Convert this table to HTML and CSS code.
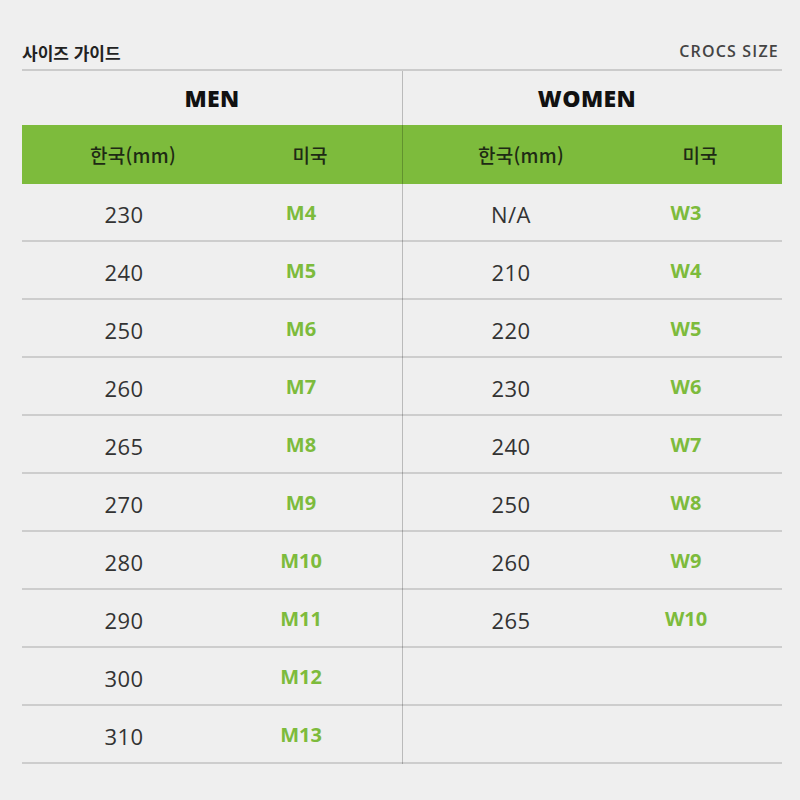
FILE: index.html
```html
<!DOCTYPE html>
<html lang="ko">
<head>
<meta charset="utf-8">
<link rel="stylesheet" href="styles.css">
</head>
<body>
<div class="page">
  <div class="titlebar">
    <span class="title">사이즈 가이드</span>
    <span class="brand">CROCS SIZE</span>
  </div>
  <div class="table">
    <div class="half men">
      <div class="gender">MEN</div>
      <div class="head"><span class="h-kr">한국(mm)</span><span class="h-us">미국</span></div>
      <div class="row"><span class="num">230</span><span class="size">M4</span></div>
      <div class="row"><span class="num">240</span><span class="size">M5</span></div>
      <div class="row"><span class="num">250</span><span class="size">M6</span></div>
      <div class="row"><span class="num">260</span><span class="size">M7</span></div>
      <div class="row"><span class="num">265</span><span class="size">M8</span></div>
      <div class="row"><span class="num">270</span><span class="size">M9</span></div>
      <div class="row"><span class="num">280</span><span class="size">M10</span></div>
      <div class="row"><span class="num">290</span><span class="size">M11</span></div>
      <div class="row"><span class="num">300</span><span class="size">M12</span></div>
      <div class="row"><span class="num">310</span><span class="size">M13</span></div>
    </div>
    <div class="half women">
      <div class="gender">WOMEN</div>
      <div class="head"><span class="h-kr">한국(mm)</span><span class="h-us">미국</span></div>
      <div class="row"><span class="num">N/A</span><span class="size">W3</span></div>
      <div class="row"><span class="num">210</span><span class="size">W4</span></div>
      <div class="row"><span class="num">220</span><span class="size">W5</span></div>
      <div class="row"><span class="num">230</span><span class="size">W6</span></div>
      <div class="row"><span class="num">240</span><span class="size">W7</span></div>
      <div class="row"><span class="num">250</span><span class="size">W8</span></div>
      <div class="row"><span class="num">260</span><span class="size">W9</span></div>
      <div class="row"><span class="num">265</span><span class="size">W10</span></div>
      <div class="row"><span class="num"></span><span class="size"></span></div>
      <div class="row"><span class="num"></span><span class="size"></span></div>
    </div>
  </div>
</div>
</body>
</html>
```
FILE: styles.css
```css
html, body {
  margin: 0;
  padding: 0;
  background: #efefef;
}
body {
  width: 800px;
  height: 800px;
  font-family: "Open Sans", "Noto Sans CJK KR", sans-serif;
  color: #333;
}
.page {
  padding: 0 18px 0 22px;
}
.titlebar {
  height: 71px;
  display: flex;
  justify-content: space-between;
  align-items: flex-end;
  border-bottom: 2px solid #cbcbcb;
  box-sizing: border-box;
}
.title {
  font-family: "Noto Sans CJK KR", sans-serif;
  font-weight: 700;
  font-size: 17px;
  color: #222;
  line-height: 17px;
  margin-bottom: 8px;
}
.brand {
  font-family: "Open Sans", sans-serif;
  font-weight: 600;
  font-size: 16px;
  letter-spacing: 1.2px;
  color: #444;
  line-height: 16px;
  margin-bottom: 10px;
  margin-right: 3px;
}
.table {
  display: grid;
  grid-template-columns: 380px 380px;
}
.half.men {
  border-right: 1px solid rgba(0, 0, 0, 0.22);
  margin-right: -1px;
  position: relative;
  z-index: 1;
}
.gender {
  height: 54px;
  display: flex;
  align-items: center;
  justify-content: center;
  font-weight: 800;
  font-size: 23px;
  color: #111;
  letter-spacing: 0.4px;
}
.men .gender { padding-right: 0; }
.women .gender { padding-right: 10px; }
.head {
  height: 59px;
  background: #7dbb3c;
  display: grid;
  align-items: center;
  font-weight: 500;
  font-size: 19px;
  color: #1e2a14;
}
.head span { text-align: center; }
.h-kr {
  font-family: "Noto Sans CJK KR", sans-serif;
  letter-spacing: 0.3px;
}
.h-us {
  font-family: "Noto Sans CJK KR", sans-serif;
  font-weight: 500;
}
.row {
  height: 58px;
  box-sizing: border-box;
  border-bottom: 2px solid #cdcdcd;
  display: grid;
  align-items: center;
}
.row span { text-align: center; }
.num {
  font-size: 22px;
  letter-spacing: 0.5px;
  color: #333;
  padding-top: 4px;
}
.size {
  font-size: 20px;
  font-weight: 700;
  color: #7dbb3c;
  padding-top: 1px;
}
.men .row { grid-template-columns: 204px 150px 1fr; }
.men .head { grid-template-columns: 222px 132px 1fr; }
.women .row { grid-template-columns: 218px 132px 1fr; }
.women .head { grid-template-columns: 238px 120px 1fr; }
```
